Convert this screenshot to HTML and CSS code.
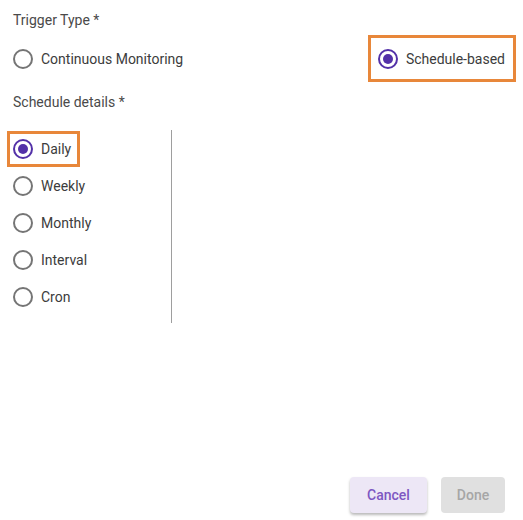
FILE: index.html
```html
<!DOCTYPE html>
<html>
<head>
<meta charset="utf-8">
<link rel="stylesheet" href="styles.css">
</head>
<body>
<div class="page">
  <div class="title t1">Trigger Type *</div>
  <div class="trigger-row">
    <label class="opt"><span class="radio"></span><span>Continuous Monitoring</span></label>
    <label class="opt hl hl-sched"><span class="radio checked"></span><span>Schedule-based</span></label>
  </div>
  <div class="title t2">Schedule details *</div>
  <div class="schedule">
    <div class="sched-list">
      <div class="row"><label class="opt hl hl-daily"><span class="radio checked"></span><span>Daily</span></label></div>
      <div class="row"><label class="opt"><span class="radio"></span><span>Weekly</span></label></div>
      <div class="row"><label class="opt"><span class="radio"></span><span>Monthly</span></label></div>
      <div class="row"><label class="opt"><span class="radio"></span><span>Interval</span></label></div>
      <div class="row"><label class="opt"><span class="radio"></span><span>Cron</span></label></div>
    </div>
    <div class="sched-detail"></div>
  </div>
  <div class="footer">
    <button class="btn cancel">Cancel</button>
    <button class="btn done">Done</button>
  </div>
</div>
</body>
</html>
```

FILE: styles.css
```css
* { box-sizing: border-box; }
html, body { margin: 0; padding: 0; background: #fff; }
body {
  font-family: Roboto, "Liberation Sans", sans-serif;
  font-size: 14px;
  color: #3c3c3c;
}
.page {
  height: 520px;
  display: flex;
  flex-direction: column;
  padding: 10px 7px 7px 13px;
}
.title {
  line-height: 20px;
  color: #4a4a4a;
}
.trigger-row {
  margin-top: 5px;
  height: 47px;
  display: flex;
  align-items: center;
  justify-content: space-between;
}
.opt {
  display: inline-flex;
  align-items: center;
  gap: 8px;
  line-height: 20px;
  color: #3c3c3c;
}
.radio {
  width: 20px;
  height: 20px;
  border-radius: 50%;
  border: 2px solid #757575;
  display: inline-flex;
  align-items: center;
  justify-content: center;
  flex: none;
}
.radio.checked {
  border-color: #5331a8;
}
.radio.checked::after {
  content: "";
  width: 10px;
  height: 10px;
  border-radius: 50%;
  background: #5331a8;
}
.hl {
  border: 3px solid #e8873a;
}
.hl-sched {
  height: 47px;
  padding: 0 8px 0 7px;
}
.hl-daily {
  height: 36px;
  margin-left: -6px;
  padding: 0 6px 0 3px;
}
.t2 {
  margin-top: 10px;
}
.schedule {
  margin-top: 18px;
  display: flex;
}
.sched-list {
  width: 159px;
  border-right: 1px solid #9e9e9e;
  padding-bottom: 8px;
}
.row {
  height: 37px;
  display: flex;
  align-items: center;
}
.sched-detail { flex: 1; }
.footer {
  margin-top: auto;
  display: flex;
  justify-content: flex-end;
  gap: 14px;
  padding-right: 11px;
}
.btn {
  font-family: Roboto, "Liberation Sans", sans-serif;
  font-size: 14px;
  font-weight: 500;
  height: 36px;
  border: none;
  border-radius: 4px;
  padding: 0;
}
.cancel {
  width: 77px;
  background: #ede7f6;
  color: #7e57c2;
  box-shadow: 0 2px 3px rgba(0,0,0,0.28);
}
.done {
  width: 64px;
  background: #e0e0e0;
  color: #a6a6a6;
}
```
